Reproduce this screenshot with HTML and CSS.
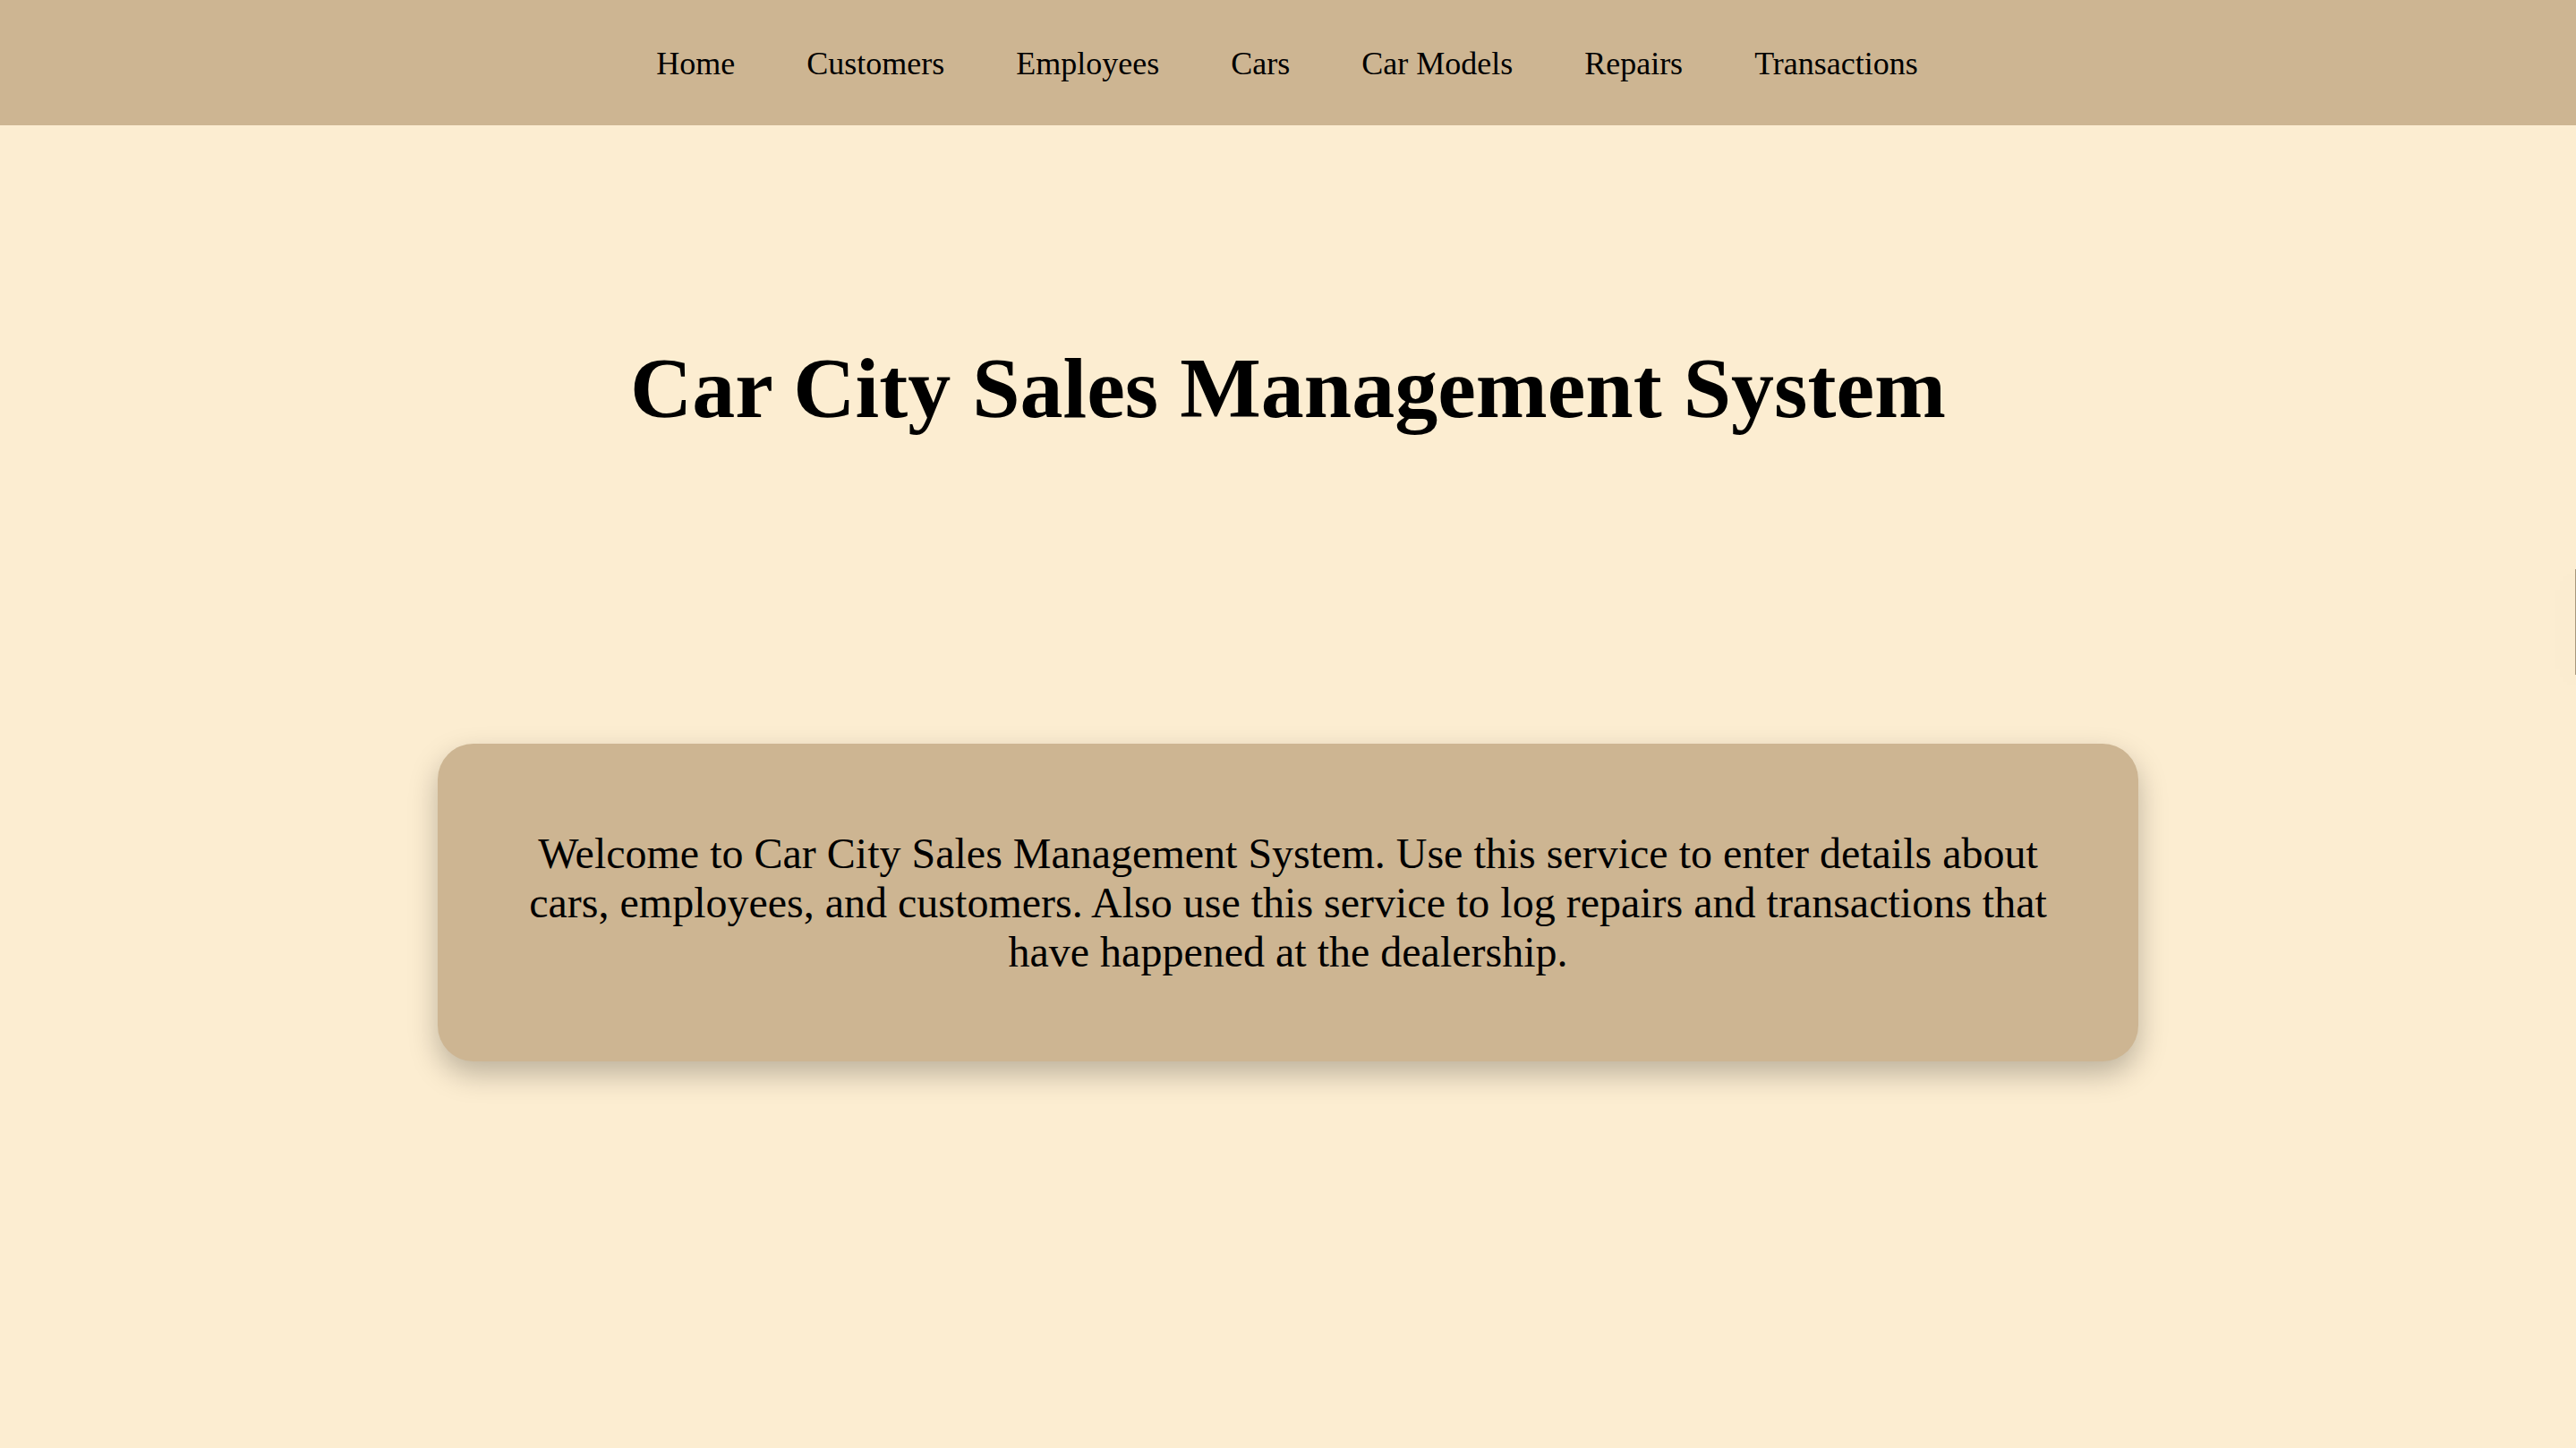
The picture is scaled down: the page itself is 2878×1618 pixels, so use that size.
FILE: index.html
```html
<!DOCTYPE html>
<html lang="en">
<head>
<meta charset="utf-8">
<title>Car City Sales Management System</title>
<link rel="stylesheet" href="styles.css">
</head>
<body>
<nav class="topnav">
  <a class="nav-link" href="#">Home</a>
  <a class="nav-link" href="#">Customers</a>
  <a class="nav-link" href="#">Employees</a>
  <a class="nav-link" href="#">Cars</a>
  <a class="nav-link" href="#">Car Models</a>
  <a class="nav-link" href="#">Repairs</a>
  <a class="nav-link" href="#">Transactions</a>
</nav>
<main class="content">
  <h1 class="title">Car City Sales Management System</h1>
  <section class="card">
    <p class="card-text">Welcome to Car City Sales Management System. Use this service to enter details about cars, employees, and customers. Also use this service to log repairs and transactions that have happened at the dealership.</p>
  </section>
</main>
<div class="edge-panel"></div>
</body>
</html>
```
FILE: styles.css
```css
html, body {
  margin: 0;
  padding: 0;
}
body {
  background: #fcedd1;
  font-family: "Liberation Serif", "Times New Roman", serif;
  color: #000;
  min-height: 1618px;
  overflow: hidden;
  position: relative;
}
.topnav {
  height: 140px;
  background: #cdb592;
  display: flex;
  justify-content: center;
  align-items: center;
  gap: 80px;
  padding: 2px 2px 0 0;
  box-sizing: border-box;
}
.nav-link {
  font-size: 36px;
  color: #000;
  text-decoration: none;
}
.content {
  display: flex;
  flex-direction: column;
  align-items: center;
}
.title {
  margin: 238px 0 0;
  font-size: 96px;
  font-weight: bold;
  text-align: center;
}
.card {
  margin-top: 342px;
  width: 66%;
  box-sizing: border-box;
  padding: 0 96px;
  background: #cdb592;
  border-radius: 40px;
  box-shadow: 0 14px 32px rgba(0, 0, 0, 0.25);
}
.card-text {
  margin: 95px 0;
  font-size: 48px;
  text-align: center;
}
.edge-panel {
  position: absolute;
  left: 2877px;
  top: 636px;
  width: 1px;
  height: 118px;
  background: #a8987c;
  box-shadow: 0 8px 32px rgba(0, 0, 0, 0.25);
}
```
